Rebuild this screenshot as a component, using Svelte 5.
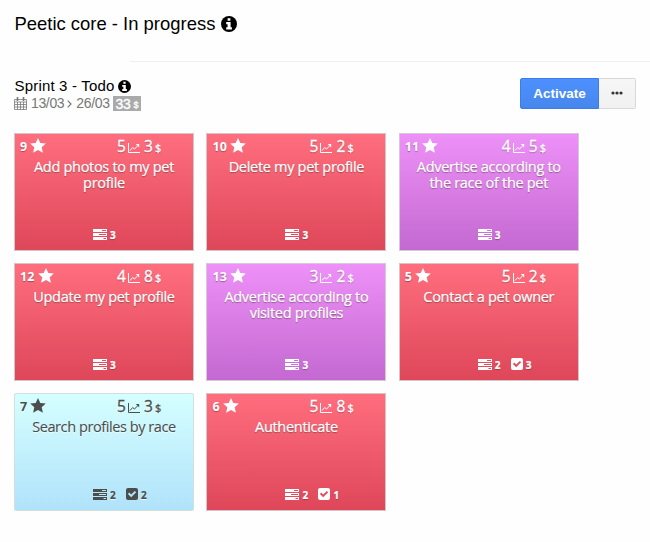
<script>
  const cards = [
    { id: 9, title: ['Add photos to my pet', 'profile'], effort: 5, value: 3, tasks: 3, color: 'red' },
    { id: 10, title: ['Delete my pet profile'], effort: 5, value: 2, tasks: 3, color: 'red' },
    { id: 11, title: ['Advertise according to', 'the race of the pet'], effort: 4, value: 5, tasks: 3, color: 'purple' },
    { id: 12, title: ['Update my pet profile'], effort: 4, value: 8, tasks: 3, color: 'red' },
    { id: 13, title: ['Advertise according to', 'visited profiles'], effort: 3, value: 2, tasks: 3, color: 'purple' },
    { id: 5, title: ['Contact a pet owner'], effort: 5, value: 2, tasks: 2, tests: 3, color: 'red' },
    { id: 7, title: ['Search profiles by race'], effort: 5, value: 3, tasks: 2, tests: 2, color: 'blue' },
    { id: 6, title: ['Authenticate'], effort: 5, value: 8, tasks: 2, tests: 1, color: 'red' }
  ];
</script>

{#snippet info(size)}
  <svg class="info" width={size} height={size} viewBox="0 0 16 16">
    <circle cx="8" cy="8" r="8" />
    <path fill="#fff" d="M6.600 2.200h2.800v2.500H6.600zM5.200 6h4.400v5.200h1.300v2.200H5.200v-2.200h1.400V8.200H5.200z" />
  </svg>
{/snippet}

<main>
  <h1>Peetic core - In progress {@render info(16)}</h1>
  <hr />
  <header>
    <div>
      <h2>Sprint 3 - Todo {@render info(13)}</h2>
      <div class="dates">
        <svg class="line" width="13" height="13" viewBox="0 0 13 13">
          <path d="M.5 2.500h12v10H.5zM.5 5h12M.5 7.500h12M.5 10h12M3.500 5v7.500M6.500 5v7.500M9.500 5v7.500" stroke-width=".8" />
          <path d="M3.500 0v4M9.500 0v4" stroke-width="1.600" />
        </svg>
        <span class="range">13/03</span>
        <svg class="line chev" width="5" height="8" viewBox="0 0 5 8" stroke-width="1.200"><path d="M.7.7 4 4 .7 7.300" /></svg>
        <span class="range">26/03</span>
        <span class="badge">33 <small>$</small></span>
      </div>
    </div>
    <div class="buttons">
      <button class="activate">Activate</button>
      <button class="more" aria-label="More">
        <svg width="12" height="4" viewBox="0 0 12 4"><circle cx="2" cy="2" r="1.600" /><circle cx="6" cy="2" r="1.600" /><circle cx="10" cy="2" r="1.600" /></svg>
      </button>
    </div>
  </header>

  <section>
    {#each cards as card}
      <article class={card.color}>
        <div class="top">
          <b>{card.id}</b>
          <svg class="star" width="16" height="15" viewBox="0 0 16 15"><path d="M8 0l2.300 5 5.500.600-4.100 3.700 1.200 5.500L8 12.100l-4.900 2.700 1.200-5.500L.2 5.600 5.700 5z" /></svg>
          <div class="stats">
            <span>{card.effort}</span>
            <svg class="chart" width="12" height="10" viewBox="0 0 12 10"><path d="M.5 0v9.500H12M2 7.500l2.700-3 1.800 1.600L10 2.300" fill="none" stroke="currentColor" stroke-width="1" /><path d="M7.800 1h3.400v3.400z" /></svg>
            <span>{card.value}</span>
            <small>$</small>
          </div>
        </div>
        <div class="title">
          {#each card.title as line}<div>{line}</div>{/each}
        </div>
        <div class="foot">
          <svg width="14" height="11" viewBox="0 0 14 11"><path fill-rule="evenodd" d="M0 0h14v3H0zM9 1v1h4V1zM0 4h14v3H0zM6 5v1h7V5zM0 8h14v3H0zM10.500 9v1H13V9z" /></svg>
          <b>{card.tasks}</b>
          {#if card.tests}
            <svg class="check" width="12" height="12" viewBox="0 0 12 12"><path fill-rule="evenodd" d="M2 0h8a2 2 0 0 1 2 2v8a2 2 0 0 1-2 2H2a2 2 0 0 1-2-2V2a2 2 0 0 1 2-2zM1.900 6l3.300 3.300 5-5L8.800 2.900 5.200 6.500 3.300 4.600z" /></svg>
            <b>{card.tests}</b>
          {/if}
        </div>
      </article>
    {/each}
  </section>
</main>

<style>
  :global(body) { margin: 0; background: #fefefe; }
  main { width: 650px; height: 542px; overflow: hidden; box-sizing: border-box; padding-top: 12px; font-family: "Liberation Sans", Arial, sans-serif; color: #111; }
  svg { display: block; flex: none; fill: currentColor; }
  .line { fill: none; stroke: #777; }
  h1, h2 { margin: 0 0 0 14.500px; font-weight: 400; display: flex; align-items: center; color: #000; }
  h1 { font-size: 18.450px; line-height: 23px; height: 23px; gap: 6px; }
  h2 { font-size: 15px; line-height: 18px; gap: 4px; letter-spacing: .18px; }
  hr { margin: 26px 0 0 130px; border: 0; height: 1px; background: #efefef; }
  header { display: flex; justify-content: space-between; padding: 15px 14px 0 0; height: 71px; box-sizing: border-box; }
  .dates { display: flex; align-items: center; margin: 0 0 0 14px; color: #777; height: 16px; }
  .range { font-size: 14px; letter-spacing: -.35px; margin-left: 4px; }
  .chev { margin: 1px 0 0 3px; }
  .badge { background: #aaa; color: #fff; font-size: 14px; line-height: 16px; height: 15px; width: 28px; box-sizing: border-box; padding-left: 3px; margin-left: 3px; white-space: nowrap; display: flex; gap: 3px; -webkit-text-stroke: .3px #fff; letter-spacing: -.3px; }
  .badge small { font-size: 9px; line-height: 19px; }
  .buttons { display: flex; margin-top: 1px; height: 31px; }
  button { box-sizing: border-box; padding: 0; font: bold 13.500px "Liberation Sans", Arial, sans-serif; height: 31px; display: flex; align-items: center; justify-content: center; }
  .activate { width: 79px; color: #fff; border: 1px solid #3a7bee; background: linear-gradient(#4d90fe, #4787ed); border-radius: 2px 0 0 2px; padding-bottom: 1px; }
  .more { width: 37px; color: #333; border: 1px solid #d8d8d8; border-left: 0; background: linear-gradient(#f6f6f6, #f1f1f1); border-radius: 0 2px 2px 0; padding-bottom: 2px; }
  section { margin: 0 0 0 14px; display: grid; grid-template-columns: repeat(3, 180px); grid-auto-rows: 118px; gap: 12.200px 12.400px; }
  article { box-sizing: border-box; border: 1px solid #d4c6c8; color: #fff; font-family: "Open Sans", "Noto Sans", sans-serif; display: flex; flex-direction: column; text-shadow: 0 1px 1px rgba(80, 60, 60, .55); }
  .red { background: linear-gradient(#ff6e7e, #de4759); }
  .purple { background: linear-gradient(#ed91f8, #c469d1); border-color: #d5c8d7; }
  .blue { background: linear-gradient(#d5ffff, #b0e2fa); border-color: #d2dfe1; border-radius: 2px; color: #4d4d4d; text-shadow: 0 1px 1px rgba(255, 255, 255, .8); }
  .top { display: flex; height: 25px; padding-left: 5px; position: relative; }
  b { font-size: 12.500px; line-height: 25px; letter-spacing: .1px; }
  .star { margin: 4px 0 0 3px; }
  .stats { position: absolute; left: 102px; top: 0; display: flex; font-size: 15.500px; line-height: 24px; letter-spacing: -.5px; -webkit-text-stroke: .3px currentColor; }
  .stats span { width: 8px; }
  .chart { margin: 9px 4px 0 3px; }
  .stats small { font-size: 11px; font-weight: 400; line-height: 27px; margin-left: 3px; }
  .title { font-size: 14.500px; line-height: 15.600px; text-align: center; letter-spacing: -.3px; white-space: nowrap; height: 66px; -webkit-text-stroke: .2px currentColor; }
  .blue .title { letter-spacing: -.42px; -webkit-text-stroke-width: .1px; }
  .foot { display: flex; align-items: center; padding-left: 78px; height: 18px; }
  .foot b { font-size: 10px; line-height: 20px; margin: 2px 0 0 3px; min-width: 6px; -webkit-text-stroke: .2px currentColor; }
  .check { margin-left: 10px; }
</style>
